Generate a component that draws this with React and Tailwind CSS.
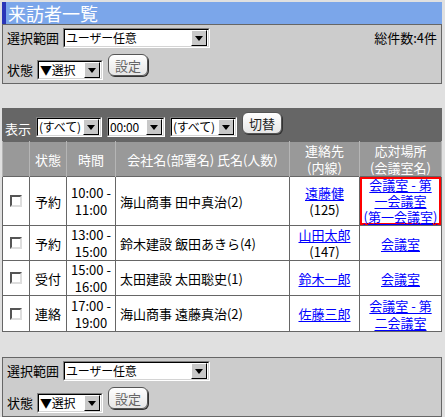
import React from 'react';

const FONT = { fontFamily: '"Noto Sans CJK JP", "MS PGothic", sans-serif' };

function Arrow() {
  return (
    <span className="flex h-[16px] w-[16px] shrink-0 items-center justify-center border border-t-white border-l-white border-b-[#000] border-r-[#000] bg-[#c8c8c8]">
      <svg width="8" height="5" viewBox="0 0 8 5">
        <path d="M0 0h8L4 5z" fill="#000" />
      </svg>
    </span>
  );
}

function Select({ width, children }) {
  return (
    <div
      className="h-[20px] shrink-0 border border-t-[#808080] border-l-[#808080] border-b-white border-r-white"
      style={{ width }}
    >
      <div className="flex h-full items-center border border-t-black border-l-black border-b-[#d4d4d4] border-r-[#d4d4d4] bg-white pl-[1px] pr-[1px] text-[12px] leading-[14px] text-black">
        <span className="min-w-0 flex-1 whitespace-nowrap tracking-[-0.2px]">{children}</span>
        <Arrow />
      </div>
    </div>
  );
}

function Btn({ children, dim }) {
  return (
    <button
      type="button"
      className={`h-[22px] shrink-0 rounded-[6px] border border-[#555] bg-gradient-to-b from-white to-[#e6e6e6] px-[6px] text-[13px] leading-none shadow-[1px_1px_0_#333] ${
        dim ? 'text-[#666]' : 'text-[#222]'
      }`}
    >
      {children}
    </button>
  );
}

function Filter({ showTotal }) {
  return (
    <div className="border border-[#666] bg-[#cccccc] pb-[3px] pl-[4px] pr-[4px] pt-[3px] text-[13px] leading-[16px] text-black">
      <div className="flex h-[20px] items-center">
        <span className="mr-[4px]">選択範囲</span>
        <Select width={147}>ユーザー任意</Select>
        {showTotal && <span className="ml-auto self-start pt-[2px]">総件数:4件</span>}
      </div>
      <div className="mt-[6px] flex items-start">
        <span className="mr-[4px] mt-[9px] leading-none">状態</span>
        <div className="mr-[5px] mt-[6px]">
          <Select width={66}>▼選択</Select>
        </div>
        <Btn dim>設定</Btn>
      </div>
    </div>
  );
}

function Check() {
  return (
    <span className="mx-auto block h-[12px] w-[12px] border-2 border-t-[#555] border-l-[#555] border-b-[#ddd] border-r-[#ddd] bg-white" />
  );
}

function A({ children }) {
  return <a href="#" className="text-[#0000ff] underline underline-offset-2">{children}</a>;
}

const rows = [
  {
    status: '予約',
    from: '10:00',
    to: '11:00',
    name: '海山商事 田中真治(2)',
    contact: '遠藤健',
    ext: '(125)',
    place: (
      <>
        <A>会議室 - 第</A>
        <br />
        <A>一会議室</A>
        <br />
        <A>(第一会議室)</A>
      </>
    ),
    hl: true,
    h: 'h-[49px]',
  },
  {
    status: '予約',
    from: '13:00',
    to: '15:00',
    name: '鈴木建設 飯田あきら(4)',
    contact: '山田太郎',
    ext: '(147)',
    place: <A>会議室</A>,
    h: 'h-[34px]',
  },
  {
    status: '受付',
    from: '15:00',
    to: '16:00',
    name: '太田建設 太田聡史(1)',
    contact: '鈴木一郎',
    place: <A>会議室</A>,
    h: 'h-[35px]',
  },
  {
    status: '連絡',
    from: '17:00',
    to: '19:00',
    name: '海山商事 遠藤真治(2)',
    contact: '佐藤三郎',
    place: (
      <>
        <A>会議室 - 第</A>
        <br />
        <A>二会議室</A>
      </>
    ),
    h: 'h-[36px]',
  },
];

export default function App() {
  return (
    <div className="min-h-[417px] w-[445px] bg-[#e0e0e0] pt-[2px]" style={FONT}>
      <div className="ml-[2px] w-[440px]">
        <div className="h-[22px] border-l-4 border-[#2a35b8] bg-[#7ba6ea] pl-[2px] text-[18px] leading-[22px] text-white">
          来訪者一覧
        </div>
        <Filter showTotal />

        <div className="mt-[24px] flex h-[33px] items-end gap-[5px] bg-[#666666] pb-[4px] pl-[3px] text-[13px] text-white">
          <span className="mb-[2px] leading-none">表示</span>
          <Select width={66}>(すべて)</Select>
          <Select width={58}>00:00</Select>
          <Select width={67}>(すべて)</Select>
          <div className="mb-[3px]">
            <Btn>切替</Btn>
          </div>
        </div>

        <table className="w-full border-collapse border border-[#666] text-[13px] leading-[17px] text-black">
          <colgroup>
            <col className="w-[27px]" />
            <col className="w-[37px]" />
            <col className="w-[49px]" />
            <col className="w-[174px]" />
            <col className="w-[70px]" />
            <col />
          </colgroup>
          <thead>
            <tr className="h-[34px] bg-[#999999] text-white">
              <th className="border-x border-[#b5b5b5] font-normal"></th>
              <th className="border-x border-[#b5b5b5] font-normal">状態</th>
              <th className="border-x border-[#b5b5b5] font-normal">時間</th>
              <th className="border-x border-[#b5b5b5] font-normal">会社名(部署名) 氏名(人数)</th>
              <th className="border-x border-[#b5b5b5] font-normal">
                連絡先
                <br />
                (内線)
              </th>
              <th className="border-x border-[#b5b5b5] font-normal">
                応対場所
                <br />
                (会議室名)
              </th>
            </tr>
          </thead>
          <tbody className="bg-white">
            {rows.map((r, i) => (
              <tr key={i} className={r.h}>
                <td className="border border-[#666]">
                  <Check />
                </td>
                <td className="border border-[#666] text-center">{r.status}</td>
                <td className="border border-[#666] text-center">
                  {r.from} -
                  <br />
                  {r.to}
                </td>
                <td className="border border-[#666] pl-[4px]">{r.name}</td>
                <td className="border border-[#666] text-center">
                  <A>{r.contact}</A>
                  {r.ext && (
                    <>
                      <br />
                      {r.ext}
                    </>
                  )}
                </td>
                <td
                  className={`border border-[#666] text-center ${
                    r.hl ? 'leading-[16px] shadow-[inset_0_0_0_2px_#ff0000]' : ''
                  }`}
                >
                  {r.place}
                </td>
              </tr>
            ))}
          </tbody>
        </table>

        <div className="mt-[25px]">
          <Filter />
        </div>
      </div>
    </div>
  );
}
